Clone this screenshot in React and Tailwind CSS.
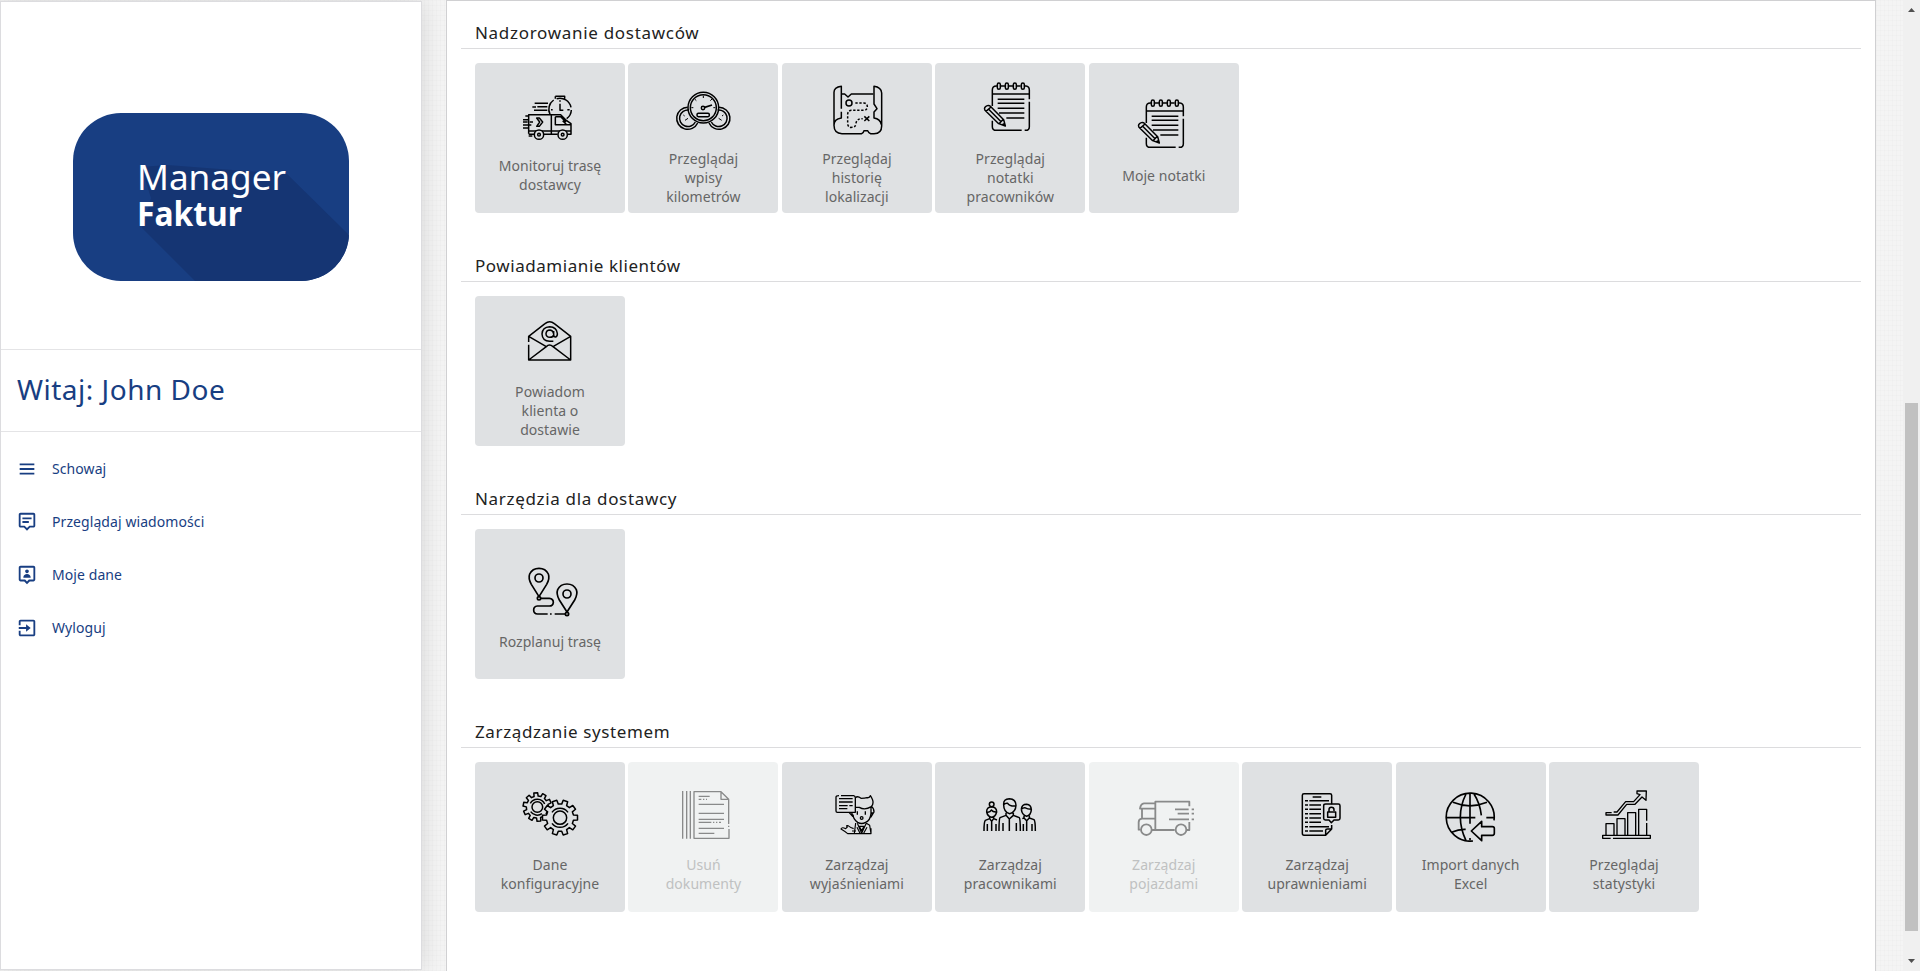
import React from "react";
import { BiMenu, BiMessageAltDetail, BiUserPin, BiExit } from "react-icons/bi";

function Icon({ box, width = 4, children }) {
  return (
    <svg
      viewBox={box}
      className="block h-[60px] w-[60px] shrink-0"
      fill="none"
      stroke="currentColor"
      strokeWidth={width}
      strokeLinejoin="round"
    >
      {children}
    </svg>
  );
}

function DeliveryIcon() {
  return (
    <Icon box="180 249 180 180" width={4.5}>
      <path d="M224 310H264M232 320H262M217 321H228M222 331H262M196 348H206M189 359H204M209 366H219M189 366H203M189 375H214M189 384H205" />
      <path d="M206 401V344H302L320 362L333 371V403H323M206 403H222M252 403H293M274 344V402M206 393H333M286 350V374H333M286 350H302L318 366M308 362L320 374" />
      <path d="M230 354H238L248 366L238 379H230L239 366Z" />
      <circle cx="237" cy="404" r="14" fill="#dfe1e3" />
      <circle cx="237" cy="404" r="4" />
      <circle cx="308" cy="404" r="14" fill="#dfe1e3" />
      <circle cx="308" cy="404" r="4" />
      <path d="M206 408H217M270 343A34 34 0 0 1 281 300M290 296A34 34 0 0 1 333 322M334 330A34 34 0 0 1 320 356M286 289H314V296M286 289V296M300 311V331H310M300 301V305M273 329H278M322 329H329" />
    </Icon>
  );
}

function GaugesIcon() {
  return (
    <Icon box="639 228 180 180" width={4.5}>
      <circle cx="730" cy="323" r="46" />
      <circle cx="730" cy="323" r="39" />
      <path d="M683 322A33 33 0 1 0 713 369M687 330A25 25 0 1 0 706 366M777 322A33 33 0 1 1 747 369M773 330A25 25 0 1 1 754 366" />
      <path d="M734 322L756 315" strokeWidth="5" />
      <circle cx="729" cy="324" r="5" />
      <rect x="711" y="340" width="37" height="10" rx="4" />
      <path d="M730 287V294M704 297L709 302M756 297L751 302M694 323H700M760 323H766M675 361L684 355M785 361L776 355M670 345L674 348M790 345L786 348" strokeWidth="3" />
    </Icon>
  );
}

function MapIcon() {
  return (
    <Icon box="141 78 180 180" width={4.5}>
      <path d="M162 222V127Q162 112 184 109V176M184 185V204Q162 207 162 226Q162 251 186 251H245Q251 248 252 242H263Q265 249 272 251H282Q305 251 305 228V129Q304 112 282 109V162L291 176L282 186V204Q301 207 304 224M162 205V227" />
      <path d="M186 132H194L204 141L214 132H280" />
      <circle cx="207" cy="159" r="9" />
      <path d="M226 159H252Q262 160 262 170Q262 181 250 181H214Q203 182 203 194V222Q205 234 216 232Q227 232 228 220Q229 206 248 206" strokeDasharray="7 5" />
      <path d="M253 199L268 213M268 199L253 213" />
    </Icon>
  );
}

function NotesIcon() {
  return (
    <Icon box="600 78 180 180" width={4.5}>
      <path d="M637 168V120Q637 108 649 108H652M662 108H675M686 108H699M709 108H722M733 108H738Q748 109 748 120V148M748 155V230Q748 241 737 241H734M725 241H649Q637 241 637 230V212M637 132H748" />
      <rect x="652" y="99" width="9" height="19" rx="4.5" />
      <rect x="676" y="99" width="9" height="19" rx="4.5" />
      <rect x="700" y="99" width="9" height="19" rx="4.5" />
      <rect x="724" y="99" width="9" height="19" rx="4.5" />
      <path d="M653 148H733M653 160H733M653 175H733M657 189H733M679 204H733" />
      <path d="M615 181Q610 172 622 167Q627 165 631 169L671 209L676 228L656 221ZM618 184L633 171M626 178L664 216M657 221L670 208M668 221L677 229" />
    </Icon>
  );
}

function EnvelopeIcon() {
  return (
    <Icon box="180 177 180 180" width={4.5}>
      <path d="M206 330V284M206 276V259L255 221Q269 209 283 221L332 259V330H206L259 290Q268 280 279 290L332 330M206 259L259 290M332 259L279 290" />
      <path d="M281 262V243M281 255Q279 262 270 262Q258 261 258 251Q259 240 270 240Q280 242 281 252Q281 262 287 261Q293 258 292 250Q290 231 269 230Q247 231 246 252Q247 273 269 274H280" />
    </Icon>
  );
}

function RouteIcon() {
  return (
    <Icon box="180 237 180 180" width={5}>
      <path d="M237 350L214 313Q204 295 209 282Q217 265 237 265Q257 265 265 282Q270 295 260 313ZM321 396L298 360Q288 342 293 329Q301 312 321 312Q341 312 349 329Q354 342 344 360Z" />
      <circle cx="237" cy="294" r="12" />
      <circle cx="321" cy="342" r="12" />
      <circle cx="237" cy="355" r="5" />
      <circle cx="321" cy="402" r="5" />
      <path d="M243 355H268Q280 356 280 367Q279 378 268 378H232Q221 379 221 390Q221 402 233 402H263M270 402H275M284 402H315" />
    </Icon>
  );
}

function gearPath(cx, cy, outer, inner, teeth, phase) {
  const points = [];
  const step = (Math.PI * 2) / teeth;
  for (let i = 0; i < teeth; i += 1) {
    const angle = phase + i * step;
    [
      [-0.3, inner],
      [-0.21, outer],
      [0.21, outer],
      [0.3, inner],
    ].forEach(([offset, radius]) => {
      const a = angle + offset * step;
      points.push(`${(cx + radius * Math.cos(a)).toFixed(1)} ${(cy + radius * Math.sin(a)).toFixed(1)}`);
    });
  }
  return `M${points.join("L")}Z`;
}

function GearsIcon() {
  return (
    <Icon box="180 186 180 180" width={4.5}>
      <path d={gearPath(232, 261, 43, 33, 10, 0.2)} />
      <circle cx="232" cy="261" r="16" />
      <path d="M211 250A24 24 0 0 1 254 252M212 275A24 24 0 0 0 246 281" />
      <path d={gearPath(300, 293, 53, 41, 10, 0)} fill="#dfe1e3" />
      <circle cx="300" cy="293" r="20" />
      <path d="M276 277A30 30 0 0 1 324 277M276 310A30 30 0 0 0 324 310" />
    </Icon>
  );
}

function DocumentsIcon() {
  return (
    <Icon box="639 186 180 180">
      <path d="M668 213V356M680 213V356M691 213V356M806 312V238L783 215H702V355H807V327M783 215V238H806M806 317V321" />
      <path d="M716 229H749M716 238H724M729 238H733M738 238H741M716 253H792M716 280H792M716 298H792M716 307H754M759 307H763M768 307H772M777 307H783M716 325H792M716 340H763" />
    </Icon>
  );
}

function ExplainIcon() {
  return (
    <Icon box="1101 186 180 180" width={4}>
      <path d="M1143 227H1181Q1186 228 1186 233V277H1167L1178 289L1175 277M1167 277H1132Q1128 277 1128 273V231Q1128 227 1137 227M1137 236H1178M1137 246H1178M1137 257H1163M1168 257H1178M1137 266H1162" />
      <path d="M1186 233Q1193 227 1203 235Q1215 235 1221 233Q1229 234 1231 227Q1240 240 1239 248Q1239 254 1234 260Q1214 272 1198 262H1187M1233 261V280Q1231 301 1217 307Q1205 314 1193 307Q1180 299 1179 284M1234 259Q1242 265 1242 276L1233 291Q1230 277 1242 278" />
      <circle cx="1205" cy="294" r="4" />
      <path d="M1192 274V284M1216 274V284" />
      <path d="M1187 309L1183 341M1192 310L1205 340L1219 309M1198 319H1212L1205 332ZM1219 310L1229 316L1233 341H1163Q1155 334 1143 327Q1146 320 1157 326L1162 321Q1156 316 1164 317Q1174 325 1181 326M1191 322L1200 340M1221 322L1211 340M1176 333H1188M1233 325V341" strokeWidth="3.5" />
    </Icon>
  );
}

function PeopleIcon() {
  return (
    <Icon box="150 96 180 180" width={4.5}>
      <path d="M221 164Q220 147 238 146Q258 147 258 166Q257 187 239 191Q221 186 221 164Q226 159 233 160Q238 169 257 168M228 188V196L238 207L250 196V188M228 196L210 203Q207 206 207 243M250 196L268 203Q271 206 271 243M238 207V243M219 219V243M259 219V243" />
      <circle cx="185" cy="163" r="7" />
      <path d="M170 186Q169 171 185 170Q200 171 200 186Q196 201 185 202Q173 200 170 186Q180 188 184 180Q189 187 200 186M179 200V206L166 211Q162 214 162 243M179 206L185 214L191 206V200M191 206L201 210M185 214V243M172 222V243M198 222V243" />
      <path d="M274 178Q275 163 290 163Q303 164 304 179Q303 195 290 199Q276 195 274 178Q279 173 284 173Q293 178 304 178M282 197V204L290 212L298 204V197M277 206L282 204M298 204L312 209Q316 212 316 243M290 212V243M280 222V243M306 222V243" />
    </Icon>
  );
}

function TruckIcon() {
  return (
    <Icon box="612 96 180 180" width={5.5}>
      <path d="M778 169V155H676V240H734M778 216V240H771M676 160H642Q632 161 630 176H675M636 176V206H675M636 206Q626 207 626 217V239H631M666 240H676M735 178H776M785 178H793M743 191H777M785 191H799M717 208H777M785 208H796" />
      <circle cx="649" cy="239" r="16" />
      <circle cx="753" cy="239" r="16" />
    </Icon>
  );
}

function PermissionsIcon() {
  return (
    <Icon box="0 0 180 180" width={4.5}>
      <path d="M134 67V40Q134 35 129 35H51Q46 35 46 40V154Q46 160 51 160H116L134 141V129M116 160V145Q116 141 121 141H134M77 45H103" />
      <path d="M54 56H63M67 56H126M54 69H63M67 69H102M54 82H63M67 82H102M54 95H63M67 95H102M54 108H63M67 108H102M54 121H63M67 121H102M54 134H63M67 134H126M54 147H63M67 147H108" />
      <path d="M116 66H154Q159 66 159 71V109Q159 114 154 114H141L133 122L126 114H115Q110 114 110 109V71Q110 66 116 66Z" />
      <path d="M122 90H146V106H122ZM126 90V83Q126 76 133 76Q141 76 141 83V87" />
    </Icon>
  );
}

function ImportIcon() {
  return (
    <Icon box="333 96 180 180" width={5}>
      <path d="M492 211A72 72 0 1 0 429 273M420 130V221M348 203H436M469 203H493M408 132Q374 200 408 272M432 132Q450 160 454 196M420 264V270M369 157Q420 178 471 157M367 246Q386 237 407 238" />
      <path d="M455 214V230H487Q493 230 493 235V250Q493 256 487 256H455V272L424 243Z" />
    </Icon>
  );
}

function StatsIcon() {
  return (
    <Icon box="792 96 180 180" width={4}>
      <path d="M842 265H818V256H961V265H849M828 256V221H852V256M861 256V206H885V256M893 256V188H917V256M950 256V219M950 212V178H926V256" />
      <path d="M845 188H828V195H864L890 163H915L936 141L948 151L949 123H921V131L930 134L911 155H887L861 186H851" />
    </Icon>
  );
}

const TILE_PADDING = { 1: "pt-[30px]", 2: "pt-[20px]", 3: "pt-[13px]" };

const SECTIONS = [
  {
    title: "Nadzorowanie dostawców",
    spacing: "tracking-[0.7px]",
    tiles: [
      { icon: DeliveryIcon, lines: ["Monitoruj trasę", "dostawcy"] },
      { icon: GaugesIcon, lines: ["Przeglądaj", "wpisy", "kilometrów"] },
      { icon: MapIcon, lines: ["Przeglądaj", "historię", "lokalizacji"] },
      { icon: NotesIcon, lines: ["Przeglądaj", "notatki", "pracowników"] },
      { icon: NotesIcon, lines: ["Moje notatki"] },
    ],
  },
  {
    title: "Powiadamianie klientów",
    spacing: "tracking-[0.55px]",
    tiles: [{ icon: EnvelopeIcon, lines: ["Powiadom", "klienta o", "dostawie"] }],
  },
  {
    title: "Narzędzia dla dostawcy",
    spacing: "tracking-[0.67px]",
    tiles: [{ icon: RouteIcon, lines: ["Rozplanuj trasę"] }],
  },
  {
    title: "Zarządzanie systemem",
    spacing: "tracking-[0.62px]",
    tiles: [
      { icon: GearsIcon, lines: ["Dane", "konfiguracyjne"] },
      { icon: DocumentsIcon, lines: ["Usuń", "dokumenty"], disabled: true },
      { icon: ExplainIcon, lines: ["Zarządzaj", "wyjaśnieniami"] },
      { icon: PeopleIcon, lines: ["Zarządzaj", "pracownikami"] },
      { icon: TruckIcon, lines: ["Zarządzaj", "pojazdami"], disabled: true },
      { icon: PermissionsIcon, lines: ["Zarządzaj", "uprawnieniami"] },
      { icon: ImportIcon, lines: ["Import danych", "Excel"] },
      { icon: StatsIcon, lines: ["Przeglądaj", "statystyki"] },
    ],
  },
];

const MENU = [
  { icon: BiMenu, label: "Schowaj" },
  { icon: BiMessageAltDetail, label: "Przeglądaj wiadomości" },
  { icon: BiUserPin, label: "Moje dane" },
  { icon: BiExit, label: "Wyloguj" },
];

function Tile({ icon: Glyph, lines, disabled }) {
  return (
    <button
      className={`flex h-[150px] w-[150px] shrink-0 flex-col items-center rounded ${TILE_PADDING[lines.length]} ${
        disabled ? "bg-[#f0f2f2]" : "bg-[#dfe1e3]"
      }`}
    >
      <span className={disabled ? "text-[#898a8a]" : "text-black"}>
        <Glyph />
      </span>
      <span
        className={`mt-[13px] flex flex-col text-center text-[14px] leading-[19px] tracking-[0.06px] whitespace-nowrap ${
          disabled ? "text-[#bfc1c1]" : "text-[#666]"
        }`}
      >
        {lines.map((line) => (
          <span key={line}>{line}</span>
        ))}
      </span>
    </button>
  );
}

function Logo() {
  return (
    <svg viewBox="0 0 276 168" className="block h-[168px] w-[276px]">
      <defs>
        <clipPath id="badge">
          <rect width="276" height="168" rx="48" />
        </clipPath>
      </defs>
      <g clipPath="url(#badge)">
        <rect width="276" height="168" fill="#183e82" />
        <path d="M68 54L94 52L214 61L276 122V168H122L69 115L78 85Z" fill="#153573" />
      </g>
      <text x="64" y="77" fontSize="34" fontWeight="400" fill="#fff" textLength="149" lengthAdjust="spacingAndGlyphs">
        Manager
      </text>
      <text x="64" y="113" fontSize="34" fontWeight="700" fill="#fff" textLength="105" lengthAdjust="spacingAndGlyphs">
        Faktur
      </text>
    </svg>
  );
}

function Sidebar() {
  return (
    <aside className="z-10 mt-px flex h-[969px] w-[422px] shrink-0 flex-col border border-[#dcdcdf] bg-white text-[#183e82] shadow-[0_0_24px_rgba(0,0,0,0.12)]">
      <div className="h-[348px] border-b border-[#e4e4e6] pt-[111px] pl-[72px]">
        <Logo />
      </div>
      <h1 className="flex h-[82px] items-center border-b border-[#e4e4e6] pb-[3px] pl-4 text-[28px] tracking-[0.5px] whitespace-nowrap">
        Witaj: John Doe
      </h1>
      <nav className="flex flex-col pt-[10px] pl-[15px]">
        {MENU.map(({ icon: Glyph, label }) => (
          <a key={label} className="flex h-[53px] items-center gap-3.5 text-[14px] tracking-[0.08px]">
            <Glyph className="h-[22px] w-[22px]" />
            {label}
          </a>
        ))}
      </nav>
    </aside>
  );
}

function Scrollbar() {
  return (
    <div className="flex w-[17px] shrink-0 flex-col items-center bg-[#f0f0f0]">
      <svg viewBox="0 0 17 17" className="h-[17px] w-[17px]" fill="#505050">
        <path d="M5 12L8.500 8L12 12Z" />
      </svg>
      <div className="mt-[386px] h-[528px] w-[13px] bg-[#c1c1c1]" />
      <svg viewBox="0 0 17 17" className="mt-[23px] h-[17px] w-[17px]" fill="#505050">
        <path d="M5 5L8.500 9L12 5Z" />
      </svg>
    </div>
  );
}

export default function App() {
  return (
    <div className="flex h-[971px] w-[1920px] overflow-hidden bg-[#f4f4f4] bg-[repeating-linear-gradient(0deg,rgba(0,0,0,0.012)_0_1px,transparent_1px_5px),repeating-linear-gradient(90deg,rgba(0,0,0,0.012)_0_1px,transparent_1px_4px)] font-['Noto_Sans','Open_Sans',sans-serif]">
      <Sidebar />
      <main className="ml-6 w-[1430px] shrink-0 border border-b-0 border-[#d0d0d2] bg-white px-[14px] pt-[19px]">
        {SECTIONS.map(({ title, spacing, tiles }) => (
          <section key={title} className="h-[233px]">
            <h2
              className={`h-[29px] border-b border-[#dcdcde] pl-[14px] text-[17px] leading-[26px] text-[#222] ${spacing}`}
            >
              {title}
            </h2>
            <div className="mt-[14px] flex gap-[3.45px] pl-[14px]">
              {tiles.map((tile) => (
                <Tile key={tile.lines.join(" ")} {...tile} />
              ))}
            </div>
          </section>
        ))}
      </main>
      <div className="flex-1" />
      <Scrollbar />
    </div>
  );
}
